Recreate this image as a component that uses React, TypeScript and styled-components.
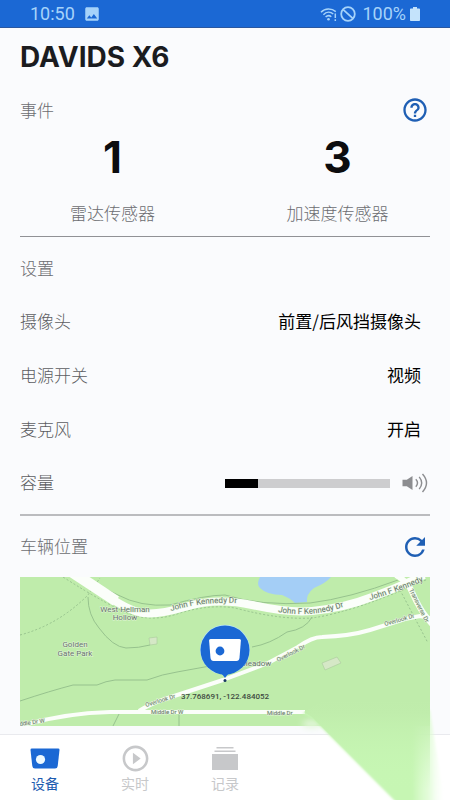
import React, { useState } from "react";
import styled, { createGlobalStyle } from "styled-components";
import { MdHelpOutline, MdImage, MdPlayCircleOutline, MdRefresh } from "react-icons/md";

const BLUE = "#1b68d4";
const INK_BLUE = "#1f5fb4";
const SANS = '"Noto Sans CJK SC", "Noto Sans", sans-serif';

const GlobalStyle = createGlobalStyle`
  * { box-sizing: border-box; }
  body { margin: 0; background: #fafbfd; font-family: ${SANS}; color: #0c0c0e; }
  button { font: inherit; color: inherit; background: none; border: 0; padding: 0; cursor: pointer; }
`;

const Screen = styled.div`
  position: relative;
  display: flex;
  flex-direction: column;
  min-height: 100vh;
  overflow: hidden;
`;

const StatusBar = styled.header`
  display: flex;
  align-items: center;
  justify-content: space-between;
  height: 28px;
  padding: 1px 30px 0;
  background: ${BLUE};
  border-bottom: 1px solid #2a57a0;
  color: #a6d3fa;
  font: 18px/26px Roboto, sans-serif;
`;

const StatusGroup = styled.div<{ $gap: number }>`
  display: flex;
  align-items: center;
  gap: ${(p) => p.$gap}px;
  svg { display: block; }
`;

const Main = styled.main`
  flex: 1;
  padding: 11px 20px 8px;
`;

const Title = styled.h1`
  margin: 0;
  font: 700 28px/36px Inter, "Liberation Sans", sans-serif;
  color: #1b1c1f;
`;

const SectionHead = styled.div`
  display: flex;
  align-items: center;
  justify-content: space-between;
`;

const EventHead = styled(SectionHead)`
  height: 32px;
  margin-top: 19px;
`;

const MapHead = styled(SectionHead)`
  height: 61px;
`;

const Label = styled.h2`
  margin: 0;
  padding-bottom: 1px;
  font-size: 17px;
  line-height: 24px;
  font-weight: 300;
  color: #6c6d71;
`;

const IconButton = styled.button`
  display: grid;
  place-items: center;
  width: 30px;
  height: 30px;
  color: ${INK_BLUE};
`;

const Stats = styled.dl`
  display: grid;
  grid-template-columns: 1fr 1fr;
  margin: 0 -20px;
  padding: 5px 0 11px;
  text-align: center;
`;

const Stat = styled.div`
  display: flex;
  flex-direction: column-reverse;
  gap: 18px;
`;

const StatName = styled.dt`
  font-size: 17px;
  line-height: 24px;
  font-weight: 300;
  color: #6c6d71;
`;

const StatValue = styled.dd`
  margin: 0;
  font: 700 44px/52px Inter, "Liberation Sans", sans-serif;
`;

const Divider = styled.hr<{ $weight: number }>`
  margin: 0;
  border: 0;
  height: ${(p) => p.$weight}px;
  background: ${(p) => (p.$weight > 1 ? "#bbbcbf" : "#909195")};
`;

const Settings = styled.section`
  display: grid;
  grid-auto-rows: 1fr;
  height: 268px;
  margin: 5px 0 4px;
`;

const Row = styled.div`
  display: flex;
  align-items: center;
  justify-content: space-between;
  font-size: 17px;
  line-height: 24px;
`;

const RowName = styled.label`
  padding-bottom: 2px;
  font-weight: 300;
  color: #5c5d61;
`;

const RowValue = styled.button`
  margin-right: 9px;
  padding-bottom: 2px;
  font-weight: 400;
  color: #000;
`;

const VolumeControl = styled.div`
  display: flex;
  align-items: center;
  gap: 12px;
  margin-right: 2px;
`;

const VolumeSlider = styled.input`
  appearance: none;
  width: 165px;
  height: 9px;
  margin: 0;
  background: linear-gradient(to right, #000 var(--level), #cdcdcf var(--level));
  &::-webkit-slider-thumb { appearance: none; width: 1px; height: 9px; }
`;

const MapFrame = styled.div`
  height: 149px;
  background: #bfecab;
  svg { display: block; width: 100%; height: 100%; }
`;

const MapText = styled.text<{ $size: number }>`
  font-family: Roboto, sans-serif;
  font-size: ${(p) => p.$size}px;
  fill: #66736a;
  stroke: #e4f5dc;
  stroke-width: 1px;
  paint-order: stroke;
`;

const CoordText = styled.text`
  font: 500 8px Roboto, sans-serif;
  fill: #3e4b41;
`;

const TabBar = styled.nav`
  display: grid;
  grid-template-columns: repeat(5, 1fr);
  height: 66px;
  background: #fff;
  border-top: 1px solid #e9eaee;
`;

const Tab = styled.button<{ $active?: boolean }>`
  display: flex;
  flex-direction: column;
  align-items: center;
  padding-top: 7px;
  font-size: 14px;
  line-height: 18px;
  color: ${(p) => (p.$active ? "#1d5cb0" : "#c7c8ca")};
  svg { display: block; }
`;

const TabIcon = styled.span`
  display: grid;
  place-items: center;
  height: 32px;
`;

const CornerFade = styled.svg`
  position: absolute;
  right: 0;
  bottom: 0;
  pointer-events: none;
`;

function WifiIcon() {
  return (
    <svg width="18" height="15" viewBox="0 0 18 15" fill="none" stroke="currentColor" strokeWidth="1.5">
      <path d="M1 5.2C5 1 11.500 1 15.800 4.600M3.400 7.700C6.500 4.600 10.500 4.700 13.300 7M5.600 10C7.400 8.300 9.700 8.400 11.300 9.800" />
      <circle cx="8.500" cy="12.200" r="1.300" fill="currentColor" stroke="none" />
      <path d="M15.300 6.500V11M15.300 12.300V14" />
    </svg>
  );
}

function BlockedIcon() {
  return (
    <svg width="16" height="16" viewBox="0 0 16 16" fill="none" stroke="currentColor" strokeWidth="1.800">
      <circle cx="8" cy="8" r="6.800" />
      <path d="M3.200 3.600L12.800 12.400" />
    </svg>
  );
}

function BatteryIcon() {
  return (
    <svg width="10" height="14" viewBox="0 0 10 14" fill="#c4e3fb">
      <path d="M3 0h4v1.500h2.200a.8.800 0 0 1 .8.800V13.200a.8.800 0 0 1-.8.800H.8a.8.800 0 0 1-.8-.8V2.300a.8.800 0 0 1 .8-.8H3z" />
    </svg>
  );
}

function SpeakerIcon() {
  return (
    <svg width="26" height="20" viewBox="0 0 26 20" fill="none" stroke="#8c8d90" strokeWidth="1.400">
      <path d="M.5 6.700h4.300L10.500 3v14L4.800 13.300H.5z" fill="#8c8d90" stroke="none" />
      <path d="M13.800 6.300Q17.200 10 13.800 13.700M17.200 3.900Q22.200 10 17.200 16.100M20.500 1Q28.500 10 20.500 19" />
    </svg>
  );
}

function DeviceIcon() {
  return (
    <svg width="30" height="21" viewBox="0 0 30 21">
      <path d="M1.800.5H28.200Q29.600.5 29.500 2L27.700 18Q27.400 20.500 25 20.500H5Q2.600 20.500 2.300 18L.5 2Q.4.500 1.800.5z" fill={BLUE} />
      <circle cx="10.500" cy="11.500" r="4.600" fill="#eef9ff" />
    </svg>
  );
}

function RecordsIcon() {
  return (
    <svg width="26" height="23" viewBox="0 0 26 23" fill="currentColor">
      <path d="M4.500 0h17v1.500h-17zM2.500 3.500h21V5h-21zM0 7h26v16H0z" />
    </svg>
  );
}

function ParkMap() {
  return (
    <svg viewBox="0 0 410 149" preserveAspectRatio="xMidYMid slice" role="img" aria-label="车辆位置">
      <defs>
        <path id="kennedyWest" d="M151 34C168 29 184 25 216 26" />
        <path id="kennedyMid" d="M258 35C280 39 304 37 326 29" />
        <path id="kennedyEast" d="M350 23Q378 15 406 3" />
      </defs>
      <path d="M240 0Q236 7 240 11Q247 18 262 18Q270 21 275 26L287 25Q286 17 294 11Q306 6 311 0z" fill="#a4cef6" />
      <path d="M302 86L317 80L321 86L305 93zM129 61L137 60V67L130 68z" fill="#d5e8c6" stroke="#a9c99c" strokeWidth=".6" />
      <g fill="none" stroke="#92bd8a" strokeWidth=".9">
        <path d="M68 0Q82 12 98 18Q120 30 150 28Q185 18 205 18Q240 29 290 26Q330 21 378 3" />
        <path d="M68 20Q68 38 79 51Q93 70 106 71Q119 71 130 68" />
        <path d="M0 124Q30 114 53 108H77Q86 104 95 103H127Q143 97 157 95L190 89" />
        <path d="M232 70Q250 67 267 55Q286 52 292 40M99 137L93 149M159 137V149" />
        <path d="M0 58Q38 48 68 18L80 1M43 0Q90 30 113 38Q135 45 160 36Q190 27 215 31Q260 43 292 41Q335 35 408 2M380 13L408 66" strokeDasharray="2 2" />
      </g>
      <g fill="none" stroke="#fbfefa" strokeLinejoin="round">
        <path d="M55 -3L80 14Q108 34 123 36Q138 38 165 30Q196 20 232 28Q268 36 292 34Q324 31 352 20Q380 10 404 -2" strokeWidth="8" />
        <path d="M52 -5L96 24" strokeWidth="11" />
        <path d="M376 -2Q388 5 392 15Q400 34 412 47" strokeWidth="6" />
        <path d="M119 134Q130 127 145 122L203 103L248 86L278 70Q292 60 302 60Q330 59 350 53L385 42L400 39L410 41" strokeWidth="4" />
        <path d="M0 149Q45 136 90 135H285" strokeWidth="4" />
      </g>
      <g textAnchor="middle">
        <MapText $size={8} x="105" y="35">West Hellman</MapText>
        <MapText $size={8} x="105" y="43">Hollow</MapText>
        <MapText $size={8} x="55" y="70">Golden</MapText>
        <MapText $size={8} x="55" y="79">Gate Park</MapText>
        <MapText $size={8} x="236" y="89">Meadow</MapText>
      </g>
      <MapText $size={8}><textPath href="#kennedyWest">John F Kennedy Dr</textPath></MapText>
      <MapText $size={8}><textPath href="#kennedyMid">John F Kennedy Dr</textPath></MapText>
      <MapText $size={8}><textPath href="#kennedyEast">John F Kennedy</textPath></MapText>
      <MapText $size={6} transform="translate(389 13) rotate(63)">Transverse Dr</MapText>
      <MapText $size={6} transform="translate(258 85) rotate(-27)">Overlook Dr</MapText>
      <MapText $size={6} transform="translate(365 49) rotate(-16)">Overlook Dr</MapText>
      <MapText $size={6} transform="translate(126 130) rotate(-17)">Overlook Dr</MapText>
      <MapText $size={6} x="131" y="137">Middle Dr W</MapText>
      <MapText $size={6} x="247" y="138">Middle Dr</MapText>
      <MapText $size={6} transform="translate(-7 150) rotate(-8)">Middle Dr W</MapText>
      <path d="M205 100L200 95Q196 98 192 94A25 25 0 1 1 218 94Q210 95 205 100z" fill="#b7e6f3" />
      <circle cx="205" cy="73" r="24.500" fill={BLUE} />
      <path d="M192 93Q202 95 205 101Q208 95 218 93z" fill={BLUE} />
      <path d="M190.500 62H219.500Q221 62 220.900 63.500L219.500 81Q219 84 216.500 84H193.500Q191 84 190.500 81L189.100 63.500Q189 62 190.500 62z" fill="#fff" />
      <circle cx="200" cy="74" r="4.400" fill={BLUE} />
      <circle cx="205" cy="103.500" r="1.500" fill="#17395f" />
      <CoordText x="205" y="122" textAnchor="middle">37.768691, -122.484052</CoordText>
    </svg>
  );
}

function GreenCorner() {
  return (
    <CornerFade width="170" height="120" viewBox="0 0 170 120" aria-hidden="true">
      <defs>
        <linearGradient id="solidLeaf" x1="0" y1="20" x2="0" y2="110" gradientUnits="userSpaceOnUse">
          <stop offset="0" stopColor="#bfecab" />
          <stop offset=".15" stopColor="#c0edac" />
          <stop offset="1" stopColor="#c8f8b5" stopOpacity="0" />
        </linearGradient>
        <linearGradient id="sideLeaf" x1="132" y1="0" x2="166" y2="0" gradientUnits="userSpaceOnUse">
          <stop offset="0" stopColor="#c6f6b3" />
          <stop offset=".5" stopColor="#d9fbcc" stopOpacity=".7" />
          <stop offset="1" stopColor="#fff" stopOpacity="0" />
        </linearGradient>
        <filter id="soft" x="-10%" y="-10%" width="120%" height="120%">
          <feGaussianBlur stdDeviation="1" />
        </filter>
        <filter id="haze" x="-50%" y="-100%" width="200%" height="300%">
          <feGaussianBlur stdDeviation="3" />
        </filter>
      </defs>
      <ellipse cx="32" cy="44" rx="10" ry="4" fill="#e4f7dc" filter="url(#haze)" />
      <path d="M22 33L40 30H150L165 124H118L32 38z" fill="url(#sideLeaf)" filter="url(#soft)" />
      <path d="M24 32L40 22H150V120H115L32 37z" fill="url(#solidLeaf)" />
    </CornerFade>
  );
}

const options = [
  { id: "camera", name: "摄像头", value: "前置/后风挡摄像头" },
  { id: "power", name: "电源开关", value: "视频" },
  { id: "mic", name: "麦克风", value: "开启" },
];

export default function App() {
  const [volume, setVolume] = useState(20);
  return (
    <Screen>
      <GlobalStyle />
      <StatusBar>
        <StatusGroup $gap={8}>
          <span>10:50</span>
          <MdImage size={18} />
        </StatusGroup>
        <StatusGroup $gap={2}>
          <WifiIcon />
          <BlockedIcon />
          <StatusGroup $gap={4}>
            <span>&nbsp;100%</span>
            <BatteryIcon />
          </StatusGroup>
        </StatusGroup>
      </StatusBar>
      <Main>
        <Title>DAVIDS X6</Title>
        <EventHead>
          <Label>事件</Label>
          <IconButton aria-label="帮助"><MdHelpOutline size={28} /></IconButton>
        </EventHead>
        <Stats>
          <Stat><StatName>雷达传感器</StatName><StatValue>1</StatValue></Stat>
          <Stat><StatName>加速度传感器</StatName><StatValue>3</StatValue></Stat>
        </Stats>
        <Divider $weight={1} />
        <Settings>
          <Row><Label>设置</Label></Row>
          {options.map((o) => (
            <Row key={o.id}>
              <RowName htmlFor={o.id}>{o.name}</RowName>
              <RowValue id={o.id}>{o.value}</RowValue>
            </Row>
          ))}
          <Row>
            <RowName htmlFor="volume">容量</RowName>
            <VolumeControl>
              <VolumeSlider
                id="volume"
                type="range"
                min={0}
                max={100}
                value={volume}
                onChange={(e) => setVolume(Number(e.target.value))}
                style={{ "--level": `${volume}%` } as React.CSSProperties}
              />
              <SpeakerIcon />
            </VolumeControl>
          </Row>
        </Settings>
        <Divider $weight={2} />
        <MapHead>
          <Label>车辆位置</Label>
          <IconButton aria-label="刷新"><MdRefresh size={30} /></IconButton>
        </MapHead>
        <MapFrame><ParkMap /></MapFrame>
      </Main>
      <TabBar>
        <Tab $active><TabIcon><DeviceIcon /></TabIcon>设备</Tab>
        <Tab><TabIcon><MdPlayCircleOutline size={31} /></TabIcon>实时</Tab>
        <Tab><TabIcon><RecordsIcon /></TabIcon>记录</Tab>
      </TabBar>
      <GreenCorner />
    </Screen>
  );
}
